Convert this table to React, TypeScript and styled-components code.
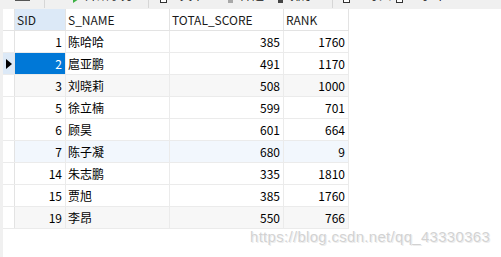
import React from 'react';
import styled, { createGlobalStyle } from 'styled-components';

interface IScoreRow {
  sid: number;
  name: string;
  total: number;
  rank: number;
  tone?: 'grey' | 'hover';
}

const rows: IScoreRow[] = [
  { sid: 1, name: '陈哈哈', total: 385, rank: 1760 },
  { sid: 2, name: '扈亚鹏', total: 491, rank: 1170 },
  { sid: 3, name: '刘晓莉', total: 508, rank: 1000, tone: 'grey' },
  { sid: 5, name: '徐立楠', total: 599, rank: 701 },
  { sid: 6, name: '顾昊', total: 601, rank: 664 },
  { sid: 7, name: '陈子凝', total: 680, rank: 9, tone: 'hover' },
  { sid: 14, name: '朱志鹏', total: 335, rank: 1810 },
  { sid: 15, name: '贾旭', total: 385, rank: 1760 },
  { sid: 19, name: '李昂', total: 550, rank: 766, tone: 'grey' },
];

const SELECTED_SID = 2;

const toneColor = (tone?: string) => (tone === 'grey' ? '#f7f7f7' : tone === 'hover' ? '#f2f7fd' : '#ffffff');

const App: React.FC = () => {
  return (
    <>
      <GlobalStyle />
      <Frame>
        {/* only the bottom edge of the toolbar is in view */}
        <Toolbar>
          <ToolIcon $w={15} $h={2} $ml={15} $color='#555' $mb={8} />
          <Sep $ml={14} />
          <Tool $ml={28}>
            <svg width='6' height='4' viewBox='0 0 6 4'>
              <path d='M0 0 L6 0 L0 4 Z' fill='#3cb043' />
            </svg>
            <Label $ml={6}>开始事务</Label>
          </Tool>
          <Sep $ml={15} />
          <Tool $ml={11}>
            <BoxIcon />
            <Label $ml={13}>文本</Label>
          </Tool>
          <Tool $ml={24}>
            <ToolIcon $w={5} $h={3} $ml={0} $color='#a8a8a8' $mb={6} />
            <Label $ml={7}>筛选</Label>
          </Tool>
          <Tool $ml={14}>
            <ToolIcon $w={5} $h={3} $ml={0} $color='#444' $mb={6} />
            <Label $ml={7}>排序</Label>
          </Tool>
          <Sep $ml={18} />
          <Tool $ml={10}>
            <BoxIcon />
          </Tool>
          <Tool $ml={17}>
            <Label $ml={0}>导入</Label>
          </Tool>
          <Tool $ml={5}>
            <BoxIcon />
          </Tool>
          <Tool $ml={15}>
            <Label $ml={0}>导出</Label>
          </Tool>
        </Toolbar>
        <Grid>
          <HeadRow>
            <Indicator />
            <HeadCell $w={50} $active>SID</HeadCell>
            <HeadCell $w={103}>S_NAME</HeadCell>
            <HeadCell $w={113}>TOTAL_SCORE</HeadCell>
            <HeadCell $w={64}>RANK</HeadCell>
          </HeadRow>
          {rows.map((row) => {
            const selected = row.sid === SELECTED_SID;
            return (
              <Row key={row.sid} $bg={toneColor(row.tone)}>
                <Indicator $selected={selected}>
                  {selected && (
                    <svg width='6' height='10' viewBox='0 0 6 10'>
                      <path d='M0 0 L6 5 L0 10 Z' fill='#000' />
                    </svg>
                  )}
                </Indicator>
                <Cell $w={50} $num $selected={selected}>
                  {row.sid}
                </Cell>
                <Cell $w={103}>{row.name}</Cell>
                <Cell $w={113} $num>
                  {row.total}
                </Cell>
                <Cell $w={64} $num>
                  {row.rank}
                </Cell>
              </Row>
            );
          })}
        </Grid>
        <Watermark>https://blog.csdn.net/qq_43330363</Watermark>
      </Frame>
    </>
  );
};

const GlobalStyle = createGlobalStyle`
  html, body {
    margin: 0;
    padding: 0;
    background: #ffffff;
  }
  body {
    font-family: 'Noto Sans CJK SC', 'Noto Sans', sans-serif;
    font-size: 12px;
    color: #000;
  }
`;

const Frame = styled.div`
  position: relative;
  width: 501px;
  height: 257px;
  overflow: hidden;
  background: #ffffff;
  border-left: 3px solid #f0f0f0;
  box-sizing: border-box;
`;

const Toolbar = styled.div`
  display: flex;
  align-items: flex-end;
  height: 9px;
  margin-left: -3px;
  background: #f0f0f0;
  overflow: hidden;
`;

const Tool = styled.div<{ $ml: number }>`
  display: flex;
  align-items: flex-end;
  margin-left: ${(p) => p.$ml}px;
  svg {
    margin-bottom: 6px;
  }
`;

const ToolIcon = styled.div<{ $w: number; $h: number; $ml: number; $mb: number; $color: string }>`
  width: ${(p) => p.$w}px;
  height: ${(p) => p.$h}px;
  margin-left: ${(p) => p.$ml}px;
  margin-bottom: ${(p) => p.$mb}px;
  background: ${(p) => p.$color};
`;

const BoxIcon = styled.div`
  width: 5px;
  height: 10px;
  margin-bottom: 6px;
  border: 1px solid #333;
  background: #fff;
`;

const Label = styled.span<{ $ml: number }>`
  display: block;
  margin-left: ${(p) => p.$ml}px;
  line-height: 16px;
  margin-bottom: 6px;
  font-size: 12px;
  color: #111;
`;

const Sep = styled.div<{ $ml: number }>`
  width: 1px;
  height: 8px;
  margin-bottom: 1px;
  margin-left: ${(p) => p.$ml}px;
  background: #d6d6d6;
`;

const Grid = styled.div`
  display: flex;
  flex-direction: column;
  width: 346px;
`;

const HeadRow = styled.div`
  display: flex;
  height: 22px;
  border-bottom: 1px solid #e3e3e3;
  box-sizing: border-box;
  background: #ffffff;
`;

const Row = styled.div<{ $bg: string }>`
  display: flex;
  height: 22px;
  border-bottom: 1px solid #ebebeb;
  box-sizing: border-box;
  background: ${(p) => p.$bg};
`;

const Indicator = styled.div<{ $selected?: boolean }>`
  display: flex;
  align-items: center;
  width: 12px;
  flex: none;
  padding-left: 3px;
  box-sizing: border-box;
  border-right: 1px solid #e3e3e3;
  background: ${(p) => (p.$selected ? '#dce9f7' : '#ffffff')};
`;

const HeadCell = styled.div<{ $w: number; $active?: boolean }>`
  display: flex;
  align-items: center;
  width: ${(p) => p.$w + 1}px;
  flex: none;
  box-sizing: border-box;
  padding-left: 2px;
  border-right: 1px solid #e3e3e3;
  background: ${(p) => (p.$active ? '#dce9f7' : '#ffffff')};
  color: #1a1a1a;
  line-height: 1;
`;

const Cell = styled.div<{ $w: number; $num?: boolean; $selected?: boolean }>`
  display: flex;
  align-items: center;
  justify-content: ${(p) => (p.$num ? 'flex-end' : 'flex-start')};
  width: ${(p) => p.$w + 1}px;
  flex: none;
  box-sizing: border-box;
  padding: 0 3px 0 2px;
  border-right: 1px solid #ebebeb;
  background: ${(p) => (p.$selected ? '#0078d7' : 'transparent')};
  color: ${(p) => (p.$selected ? '#ffffff' : '#000000')};
  line-height: 1;
`;

const Watermark = styled.div`
  position: absolute;
  left: 247px;
  top: 228px;
  font-family: 'Liberation Sans', sans-serif;
  font-size: 15px;
  letter-spacing: 0.3px;
  color: #d2d2d2;
  text-shadow: 0 0 1px #ffffff, 1px 1px 0 #ececec;
  white-space: nowrap;
`;

export default App;
